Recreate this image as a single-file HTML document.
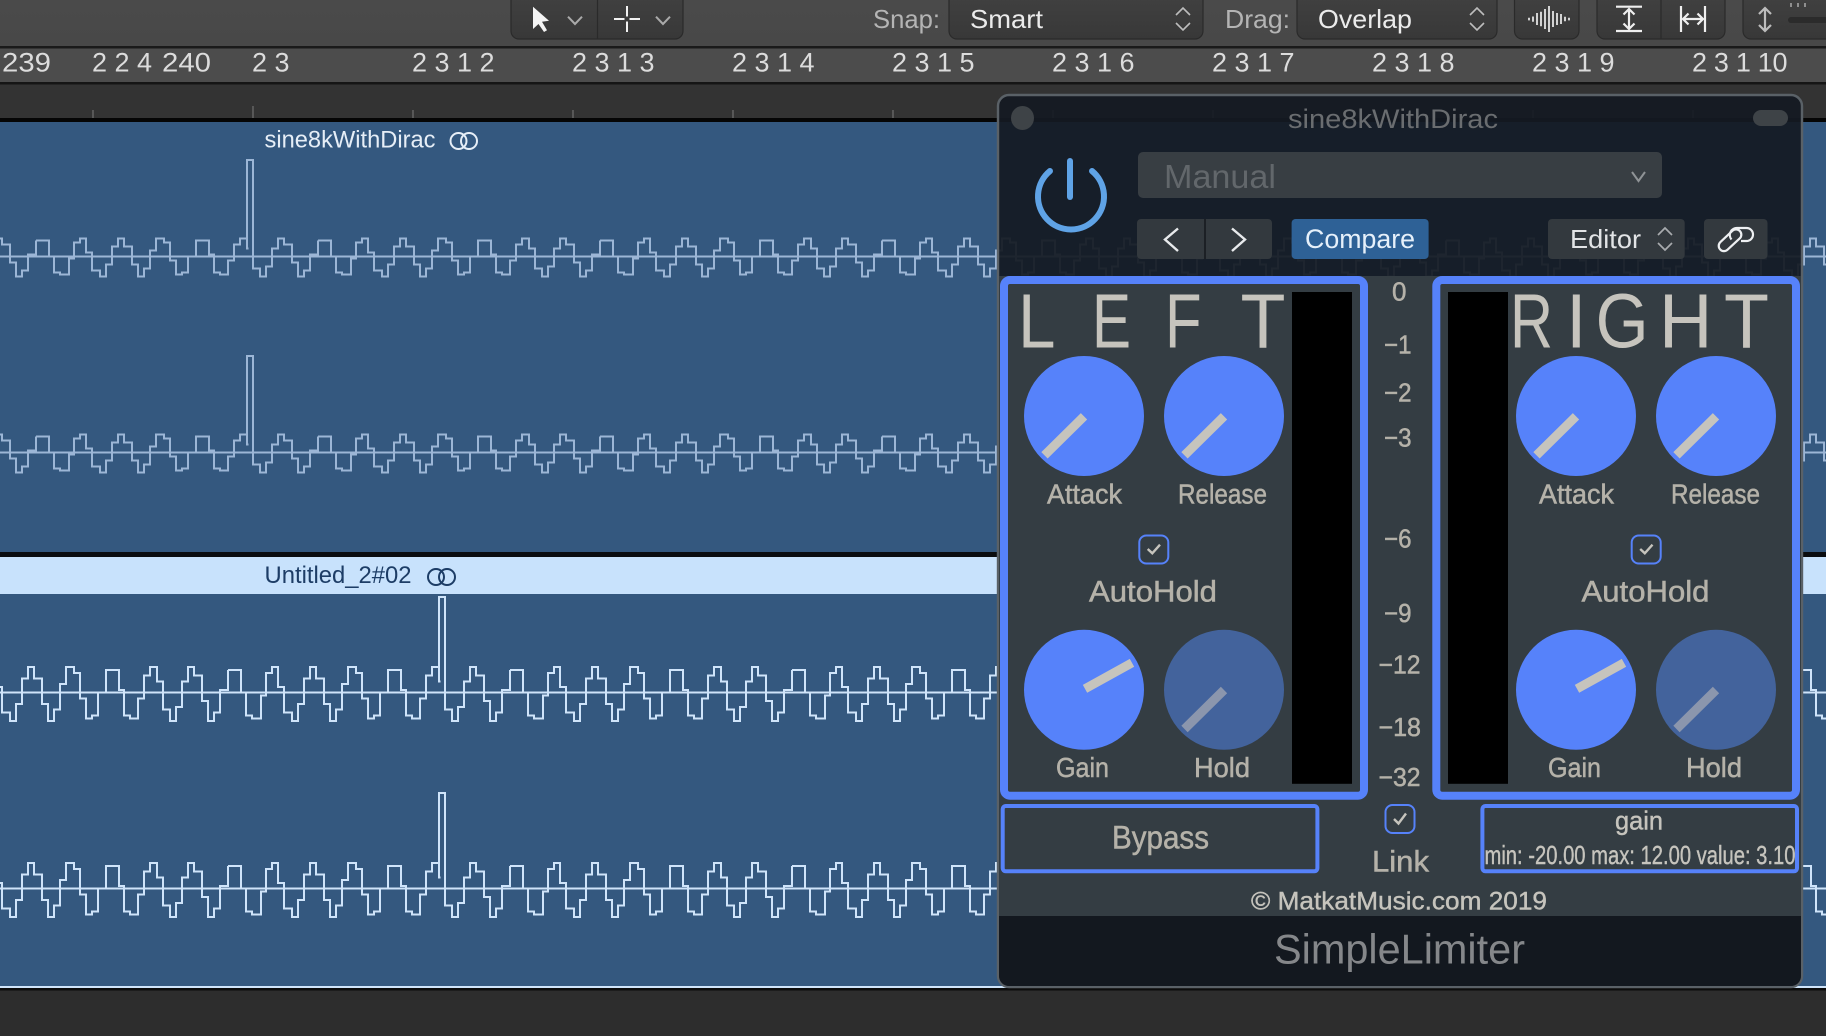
<!DOCTYPE html>
<html><head><meta charset="utf-8"><title>SimpleLimiter</title>
<style>
html,body{margin:0;padding:0;background:#2d2d2d;width:1826px;height:1036px;overflow:hidden}
svg{display:block;position:absolute;left:0;top:0}
text{font-family:"Liberation Sans",sans-serif}
.r{font-size:27px;fill:#dcdcdc}
.t{fill:#c6c4bd;font-size:77px}
.l{fill:#b5b2a9;stroke:#b5b2a9;stroke-width:.5}
.s{fill:#c6c4bd;stroke:#c6c4bd;stroke-width:.4}
.ic{fill:none;stroke:#efefef;stroke-width:2.2}
</style></head><body>
<svg width="1826" height="1036" viewBox="0 0 1826 1036" xmlns="http://www.w3.org/2000/svg">
<defs>
<linearGradient id="bar" x1="0" y1="0" x2="0" y2="1"><stop offset="0" stop-color="#4a4a4a"/><stop offset="1" stop-color="#484848"/></linearGradient>
<linearGradient id="btn" x1="0" y1="0" x2="0" y2="1"><stop offset="0" stop-color="#404040"/><stop offset="1" stop-color="#383838"/></linearGradient>
<path id="p" fill="none" vector-effect="non-scaling-stroke" stroke-width="2" d="M0,-16 H13 V0 H18 V16 H24 V18 H33 V2 H38 V-14 H44 V-18 H50 V-4 H56 V14 H64 V20 H70 V8 H76 V-10 H82 V-18 H88 V-10 H96 V8 H102 V20 H108 V12 H114 V-6 H120 V-18 H128 V-14 H134 V4 H140 V18 H146 V16 H152 V0 H160 V-16 H173 V-2 H178 V16 H184 V18 H192 V4 H198 V-12 H204 V-18 H211 V-8 H217 V12 H224 V20 H230 V10 H236 V-8 H242 V-18 H248 V-12 H256 V6 H262 V20 H268 V14 H274 V-2 H282 V-16"/>
<g id="row"><use href="#p" x="0"/><use href="#p" x="282"/><use href="#p" x="564"/><use href="#p" x="846"/><use href="#p" x="1128"/><use href="#p" x="1410"/><use href="#p" x="1692"/><use href="#p" x="1974"/></g>
</defs>

<!-- base -->
<rect width="1826" height="1036" fill="#2d2d2d"/>
<rect width="1826" height="46" fill="url(#bar)"/>
<rect y="46" width="1826" height="2.5" fill="#1a1a1a"/>
<rect y="48.5" width="1826" height="33.5" fill="#4c4c4c"/>
<rect y="82" width="1826" height="2.5" fill="#151515"/>
<rect y="84.5" width="1826" height="33.5" fill="#333333"/>
<g stroke="#707070" stroke-width="1.2">
<path d="M93,110V118M253,106V118M413,110V118M573,110V118M733,110V118M893,110V118M1053,110V118M1213,110V118M1373,110V118M1533,110V118M1693,110V118"/>
</g>
<rect y="118" width="1826" height="4" fill="#050505"/>

<!-- tracks -->
<rect y="122" width="1826" height="430" fill="#34587f"/>
<rect y="552" width="1826" height="5" fill="#0b0d10"/>
<rect y="557" width="1826" height="37" fill="#c8e2fc"/>
<rect y="594" width="1826" height="392" fill="#34587f"/>
<rect y="986" width="1826" height="2" fill="#cfe4fa"/>
<rect y="988" width="1826" height="2.5" fill="#0c0c0c"/>
<rect y="990.5" width="1826" height="45.5" fill="#2d2d2d"/>

<g shape-rendering="crispEdges" stroke="#9cb6d6" fill="none">
<use href="#row" transform="translate(-246,256.7)"/>
<use href="#row" transform="translate(-246,452.7)"/>
</g>
<g shape-rendering="crispEdges" stroke="#cfe4fa" fill="none">
<use href="#row" transform="translate(-54,692.7) scale(1,1.42)"/>
<use href="#row" transform="translate(-54,888.7) scale(1,1.42)"/>
</g>
<g fill="#34587f">
<rect x="248.5" y="245" width="3.5" height="10"/>
<rect x="248.5" y="441" width="3.5" height="10"/>
<rect x="440.5" y="675" width="3.5" height="16"/>
<rect x="440.5" y="871" width="3.5" height="16"/>
</g>
<g shape-rendering="crispEdges" stroke="#9cb6d6" fill="none">
<path stroke-width="2" d="M0,256.7H1826M0,452.7H1826"/>
<path stroke-width="2" d="M247,239V160H253V256.7M247,435V356H253V452.7"/>
</g>
<g shape-rendering="crispEdges" stroke="#cfe4fa" fill="none">
<path stroke-width="2" d="M0,692.7H1826M0,888.7H1826"/>
<path stroke-width="2" d="M439,667V597H445V692.7M439,863V793H445V888.7"/>
</g>

<text x="264.5" y="147.3" font-size="24" fill="#e6eef7" textLength="171" lengthAdjust="spacingAndGlyphs">sine8kWithDirac</text>
<g fill="none" stroke="#e6eef7" stroke-width="2"><circle cx="458.5" cy="141" r="8"/><circle cx="469" cy="141" r="8"/></g>
<text x="264.5" y="583" font-size="24" fill="#1d3d66" textLength="147" lengthAdjust="spacingAndGlyphs">Untitled_2#02</text>
<g fill="none" stroke="#1d3d66" stroke-width="2"><circle cx="436" cy="577" r="8"/><circle cx="447" cy="577" r="8"/></g>

<!-- ruler -->
<g class="r">
<text class="r" x="2" y="71.7" textLength="49" lengthAdjust="spacingAndGlyphs">239</text>
<text class="r" x="92" y="71.7">2 2 4</text>
<text class="r" x="162" y="71.7" textLength="49" lengthAdjust="spacingAndGlyphs">240</text>
<text class="r" x="252" y="71.7">2 3</text>
<text class="r" x="412" y="71.7">2 3 1 2</text>
<text class="r" x="572" y="71.7">2 3 1 3</text>
<text class="r" x="732" y="71.7">2 3 1 4</text>
<text class="r" x="892" y="71.7">2 3 1 5</text>
<text class="r" x="1052" y="71.7">2 3 1 6</text>
<text class="r" x="1212" y="71.7">2 3 1 7</text>
<text class="r" x="1372" y="71.7">2 3 1 8</text>
<text class="r" x="1532" y="71.7">2 3 1 9</text>
<text class="r" x="1692" y="71.7" textLength="95.5" lengthAdjust="spacing">2 3 1 10</text>
</g>

<!-- toolbar -->
<g stroke="#2a2a2a" stroke-width="1.2" fill="url(#btn)">
<path d="M511,-2V31a8,8 0 0 0 8,8H675a8,8 0 0 0 8,-8V-2Z"/>
<path d="M949,-2V31a8,8 0 0 0 8,8H1195a8,8 0 0 0 8,-8V-2Z"/>
<path d="M1297,-2V31a8,8 0 0 0 8,8H1489a8,8 0 0 0 8,-8V-2Z"/>
<path d="M1514.5,-2V31a8,8 0 0 0 8,8H1571a8,8 0 0 0 8,-8V-2Z"/>
<path d="M1597,-2V31a8,8 0 0 0 8,8H1717a8,8 0 0 0 8,-8V-2Z"/>
<path d="M1743,-2V31a8,8 0 0 0 8,8H1830V-2Z"/>
</g>
<path d="M597.5,0V39M1661,0V39" stroke="#2a2a2a" stroke-width="1.2"/>
<path d="M533,6.7V29L538.5,24L544,32L547,30.2L542,21.7L549,20.7Z" fill="#f4f4f4"/>
<g fill="none" stroke="#aaaaaa" stroke-width="2"><path d="M568,16.7L575,24L582,16.7"/><path d="M656,16.7L663,24L670,16.7"/></g>
<path d="M627,6V16.5M627,21.5V32M614,19H624.5M629.5,19H640" stroke="#f2f2f2" stroke-width="2" fill="none"/>
<text x="873" y="28" font-size="26" fill="#b4b4b4" textLength="67" lengthAdjust="spacingAndGlyphs">Snap:</text>
<text x="970" y="28" font-size="26" fill="#ebebeb" textLength="73" lengthAdjust="spacingAndGlyphs">Smart</text>
<text x="1225" y="28" font-size="26" fill="#b4b4b4" textLength="65" lengthAdjust="spacingAndGlyphs">Drag:</text>
<text x="1318" y="28" font-size="26" fill="#ebebeb" textLength="94" lengthAdjust="spacingAndGlyphs">Overlap</text>
<g fill="none" stroke="#bdbdbd" stroke-width="1.6">
<path d="M1176,15L1183,8L1190,15M1176,23L1183,30L1190,23"/>
<path d="M1470,15L1477,8L1484,15M1470,23L1477,30L1484,23"/>
</g>
<path d="M1529,17.7v2.7M1533,16.5v5.3M1537,13v12M1541,11.7v14.6M1545,9v20M1549,6v26M1553,11v16M1557,13v12M1561,14v10M1565,16.7v4.6M1569,17.7v2.7" stroke="#ececec" stroke-width="1.7" fill="none"/>
<g class="ic">
<path d="M1616,6.7H1642M1616,31H1642M1629,9V29M1623.5,14.5L1629,9L1634.5,14.5M1623.5,23.5L1629,29L1634.5,23.5"/>
<path d="M1681,6V32M1705,6V32M1683,19H1703M1688.5,13.5L1683,19L1688.5,24.5M1697.5,13.5L1703,19L1697.5,24.5"/>
</g>
<path d="M1765,8V31M1759,14L1765,8L1771,14M1759,25L1765,31L1771,25" fill="none" stroke="#bcbcbc" stroke-width="2.2"/>
<path d="M1791,3v4M1798,3v4M1805,3v4" stroke="#8f8f8f" stroke-width="2"/>
<rect x="1788" y="17" width="40" height="6" rx="3" fill="#2b2b2b"/>

<!-- plugin window -->
<rect x="998" y="95" width="804" height="892" rx="11" fill="#141a22" fill-opacity=".93" stroke="#5a6167" stroke-width="2.4"/>
<rect x="999" y="276" width="802" height="640" fill="#343d43"/>
<path d="M999,916H1801V976a10,10 0 0 1 -10,10H1009a10,10 0 0 1 -10,-10Z" fill="#13181f"/>

<ellipse cx="1022.5" cy="118" rx="11.5" ry="12" fill="#3e4347"/>
<rect x="1753" y="110" width="35" height="16" rx="8" fill="#3e4347"/>
<text x="1288" y="128" font-size="27" fill="#6a6d70" textLength="210" lengthAdjust="spacingAndGlyphs">sine8kWithDirac</text>

<g fill="none" stroke="#5fa3e6" stroke-width="6" stroke-linecap="round">
<path d="M1050,171A33,33 0 1 0 1092,171"/>
<path d="M1070,161V197"/>
</g>

<rect x="1138" y="152" width="524" height="46" rx="5" fill="#383e43"/>
<text x="1164" y="188" font-size="33" fill="#62676b" textLength="112" lengthAdjust="spacingAndGlyphs">Manual</text>
<path d="M1632,172L1638.5,181L1645,172" fill="none" stroke="#8f9396" stroke-width="2"/>

<rect x="1137" y="219" width="135" height="40" rx="4" fill="#33393e"/>
<path d="M1205,219V259" stroke="#15191d" stroke-width="1.5"/>
<path d="M1178,228.5L1165,239.5L1178,251M1232,228.5L1245,239.5L1232,251" fill="none" stroke="#e8eaec" stroke-width="2.4"/>
<rect x="1291.6" y="219" width="137" height="40" rx="4" fill="#2e6196"/>
<text x="1305" y="248" font-size="27" fill="#e6f0fa" textLength="110" lengthAdjust="spacingAndGlyphs">Compare</text>
<rect x="1548" y="219" width="136.7" height="40" rx="4" fill="#33393e"/>
<text x="1570" y="248" font-size="26" fill="#e2e4e6" textLength="71" lengthAdjust="spacingAndGlyphs">Editor</text>
<path d="M1658,235L1665,228L1672,235M1658,243L1665,250L1672,243" fill="none" stroke="#a8abae" stroke-width="1.7"/>
<rect x="1704" y="219" width="63.5" height="40" rx="4" fill="#33393e"/>
<g fill="none" stroke="#eef0f2" stroke-width="2.2">
<path d="M1741,241H1746.5A6.5,6.5 0 0 0 1746.5,228H1737.5A7,7 0 0 0 1731.5,239.5"/>
<rect x="1716.5" y="235" width="27" height="10.5" rx="5.2" transform="rotate(-43 1730 240.2)"/>
</g>

<!-- panels -->
<g fill="#343d43" stroke="#5682fa" stroke-width="8">
<rect x="1004" y="280" width="360" height="515.7" rx="6"/>
<rect x="1436.3" y="280" width="359.7" height="515.7" rx="6"/>
</g>
<rect x="1292" y="292" width="60" height="491.8" fill="#000"/>
<rect x="1448" y="292" width="60" height="491.8" fill="#000"/>

<g class="t">
<text class="t" x="1018" y="347.5" textLength="37.5" lengthAdjust="spacingAndGlyphs">L</text>
<text class="t" x="1092" y="347.5" textLength="39" lengthAdjust="spacingAndGlyphs">E</text>
<text class="t" x="1165" y="347.5" textLength="36.6" lengthAdjust="spacingAndGlyphs">F</text>
<text class="t" x="1240.5" y="347.5" textLength="45" lengthAdjust="spacingAndGlyphs">T</text>
<text class="t" x="1510" y="347.5" textLength="43" lengthAdjust="spacingAndGlyphs">R</text>
<text class="t" x="1566" y="347.5" textLength="20.6" lengthAdjust="spacingAndGlyphs">I</text>
<text class="t" x="1595.6" y="347.5" textLength="53" lengthAdjust="spacingAndGlyphs">G</text>
<text class="t" x="1659" y="347.5" textLength="53.4" lengthAdjust="spacingAndGlyphs">H</text>
<text class="t" x="1724" y="347.5" textLength="45" lengthAdjust="spacingAndGlyphs">T</text>
</g>

<!-- knobs -->
<g fill="#5682fa">
<circle cx="1084" cy="416" r="60"/><circle cx="1224" cy="416" r="60"/>
<circle cx="1084" cy="689.8" r="60"/>
<circle cx="1576" cy="416" r="60"/><circle cx="1716" cy="416" r="60"/>
<circle cx="1576" cy="689.8" r="60"/>
</g>
<g fill="#43639c">
<circle cx="1224" cy="689.8" r="60"/><circle cx="1716" cy="689.8" r="60"/>
</g>
<g stroke="#c6c4bd" stroke-width="9" fill="none">
<path d="M1084,416.3L1044.5,455.3M1224,416.3L1184.5,455.3M1576,416.3L1536.5,455.3M1716,416.3L1676.5,455.3"/>
<path d="M1085,688.8L1132,662.8M1577,688.8L1624,662.8"/>
</g>
<path d="M1224,690L1184.5,729M1716,690L1676.5,729" stroke="#8b96ad" stroke-width="9" fill="none"/>

<g>
<text class="l" x="1047" y="503.5" font-size="28" textLength="75" lengthAdjust="spacingAndGlyphs">Attack</text>
<text class="l" x="1178" y="503.5" font-size="28" textLength="89" lengthAdjust="spacingAndGlyphs">Release</text>
<text class="l" x="1089" y="601.3" font-size="30" textLength="128" lengthAdjust="spacingAndGlyphs">AutoHold</text>
<text class="l" x="1056" y="777.2" font-size="28" textLength="53" lengthAdjust="spacingAndGlyphs">Gain</text>
<text class="l" x="1194" y="777.2" font-size="28" textLength="56" lengthAdjust="spacingAndGlyphs">Hold</text>
<text class="l" x="1539" y="503.5" font-size="28" textLength="75" lengthAdjust="spacingAndGlyphs">Attack</text>
<text class="l" x="1671" y="503.5" font-size="28" textLength="89" lengthAdjust="spacingAndGlyphs">Release</text>
<text class="l" x="1581.5" y="601.3" font-size="30" textLength="128" lengthAdjust="spacingAndGlyphs">AutoHold</text>
<text class="l" x="1548" y="777.2" font-size="28" textLength="53" lengthAdjust="spacingAndGlyphs">Gain</text>
<text class="l" x="1686" y="777.2" font-size="28" textLength="56" lengthAdjust="spacingAndGlyphs">Hold</text>

<text class="l" x="1392" y="300.3" font-size="26">0</text>
<text class="l" x="1384" y="353.3" font-size="26" textLength="27.5" lengthAdjust="spacingAndGlyphs">−1</text>
<text class="l" x="1384" y="401.5" font-size="26" textLength="27.5" lengthAdjust="spacingAndGlyphs">−2</text>
<text class="l" x="1384" y="446.3" font-size="26" textLength="27.5" lengthAdjust="spacingAndGlyphs">−3</text>
<text class="l" x="1384" y="547.5" font-size="26" textLength="27.5" lengthAdjust="spacingAndGlyphs">−6</text>
<text class="l" x="1384" y="622" font-size="26" textLength="27.5" lengthAdjust="spacingAndGlyphs">−9</text>
<text class="l" x="1378.5" y="673.6" font-size="26" textLength="42" lengthAdjust="spacingAndGlyphs">−12</text>
<text class="l" x="1378.5" y="735.9" font-size="26" textLength="42.5" lengthAdjust="spacingAndGlyphs">−18</text>
<text class="l" x="1378.5" y="785.8" font-size="26" textLength="42" lengthAdjust="spacingAndGlyphs">−32</text>
</g>

<!-- checkboxes -->
<g fill="none" stroke="#5682fa" stroke-width="2">
<rect x="1139.3" y="535.5" width="29" height="28" rx="7"/>
<rect x="1631.7" y="535.5" width="29" height="28" rx="7"/>
<rect x="1385.5" y="805" width="29" height="28" rx="7"/>
</g>
<g fill="none" stroke="#c6c4bd" stroke-width="2.4">
<path d="M1147.7,549L1152.3,553.3L1160,544.7"/>
<path d="M1640.2,549L1644.8,553.3L1652.5,544.7"/>
<path d="M1394,819L1398.5,823.5L1406,813.5"/>
</g>

<!-- bottom controls -->
<g fill="#343d43" stroke="#5682fa" stroke-width="4">
<rect x="1002.7" y="806" width="314.7" height="65.3" rx="3"/>
<rect x="1482.4" y="806" width="314.6" height="65.3" rx="3"/>
</g>
<text class="l" x="1112" y="848.3" font-size="32" textLength="97" lengthAdjust="spacingAndGlyphs">Bypass</text>
<text class="l" x="1372" y="871.7" font-size="30" textLength="57" lengthAdjust="spacingAndGlyphs">Link</text>
<text class="s" x="1615" y="829.3" font-size="26" textLength="48" lengthAdjust="spacingAndGlyphs">gain</text>
<text class="s" x="1484.5" y="864" font-size="26" textLength="311" lengthAdjust="spacingAndGlyphs">min: -20.00 max: 12.00 value: 3.10</text>
<text class="s" x="1251" y="909.3" font-size="25" textLength="296" lengthAdjust="spacingAndGlyphs">© MatkatMusic.com 2019</text>
<text x="1274" y="963.3" font-size="42" fill="#85878a" textLength="251" lengthAdjust="spacingAndGlyphs">SimpleLimiter</text>
</svg>
</body></html>
